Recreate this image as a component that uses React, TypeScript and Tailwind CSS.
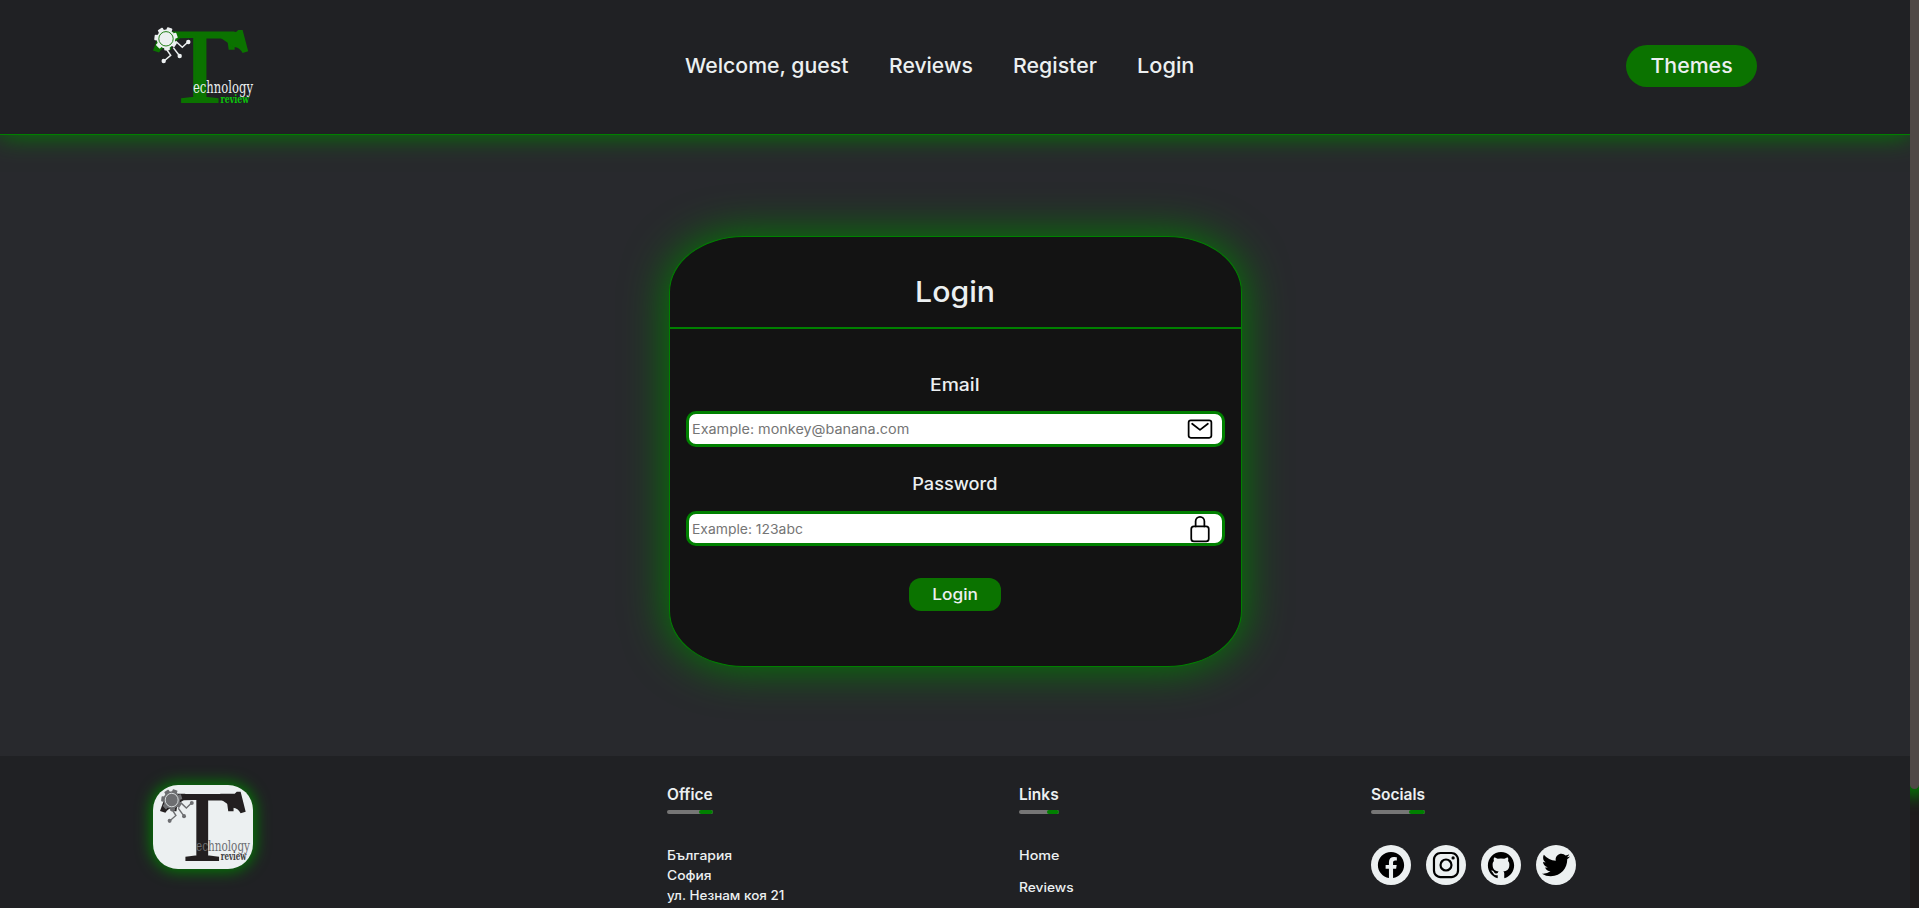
import type { ReactNode } from "react";
import {
  IoLockClosedOutline,
  IoLogoFacebook,
  IoLogoGithub,
  IoLogoInstagram,
  IoLogoTwitter,
  IoMailOutline,
} from "react-icons/io5";

type LogoProps = {
  className: string;
  letter: string;
  accent: string;
  ring: string;
  word: string;
  review: string;
};

const TEETH = [0, 1, 2, 3, 4, 5, 6];

function Logo({ className, letter, accent, ring, word, review }: LogoProps) {
  return (
    <svg className={className} viewBox="153 28 100 78" preserveAspectRatio="none" overflow="visible">
      <text
        transform="translate(164.3 103.4) scale(1.1 1)"
        fontFamily="'Liberation Serif', serif"
        fontSize="106"
        stroke={letter}
        strokeWidth="2"
        fill={letter}
      >
        T
      </text>
      <g fill={letter}>
        <path d="M220 33H236L238.3 31H242.6L248.2 52.2 242.6 54C240.5 50 238 48.5 234 48L220 38.6Z" />
        <path d="M181 33H160L153 51.5 159 53.4C161 50 164 48.5 167 48L181 38.6Z" />
      </g>
      <g fill={accent}>
        {TEETH.map((i) => (
          <rect
            key={i}
            x="163.2"
            y="28.2"
            width="5.6"
            height="6"
            rx="0.8"
            transform={`rotate(${20 + (i * 360) / 7} 166 39.8)`}
          />
        ))}
        <circle cx="166" cy="39.8" r="9.4" />
        <circle cx="188.3" cy="43" r="2.2" />
        <circle cx="179.7" cy="57" r="2.2" />
        <circle cx="163.7" cy="62" r="2.2" />
      </g>
      <circle cx="166" cy="39.8" r="7.2" fill="none" stroke={ring} strokeWidth="0.9" />
      <g fill="none" stroke={accent} strokeWidth="1.5">
        <path d="M175.7 42.3 182.3 48.3 188 43" />
        <path d="M173.3 48.6 179.7 57" />
        <path d="M165.3 48.5 170.7 56.3 164 62" />
      </g>
      <text
        x="193"
        y="94"
        textLength="60"
        lengthAdjust="spacingAndGlyphs"
        fontFamily="'DejaVu Serif', serif"
        fontSize="16"
        fill={word}
      >
        echnology
      </text>
      <text
        x="220.5"
        y="104"
        textLength="28.5"
        lengthAdjust="spacingAndGlyphs"
        fontFamily="'DejaVu Serif', serif"
        fontWeight="700"
        fontSize="11"
        fill={review}
      >
        review
      </text>
    </svg>
  );
}

function FooterHeading({ children }: { children: ReactNode }) {
  return (
    <div className="w-fit">
      <div className="h-5 text-[15.5px] font-semibold leading-5">{children}</div>
      <div className="mt-[5px] flex h-1 justify-end overflow-hidden rounded-full bg-[#767676]">
        <div className="w-[30%] rounded-full bg-[#008000]" />
      </div>
    </div>
  );
}

function SocialLink({ children }: { children: ReactNode }) {
  return (
    <a className="flex size-10 items-center justify-center rounded-full bg-[#ecf0f1] text-[30px] text-black">
      {children}
    </a>
  );
}

export default function App() {
  return (
    <div className="flex h-[908px] overflow-hidden bg-[#28292d] font-['Inter','Noto_Sans',sans-serif] text-[#ecf0f1]">
      <div className="flex min-w-0 flex-1 flex-col overflow-hidden">
        <header className="relative z-10 flex h-[135px] shrink-0 items-center border-b border-[#008000] bg-[#202124] pr-[153px] pb-0.5 pl-[153px] text-[20.5px] font-medium shadow-[0_0_25px_#008000]">
          <Logo
            className="h-[78px] w-[100px]"
            letter="#0b7300"
            accent="#ecf0f1"
            ring="#0b7300"
            word="#ecf0f1"
            review="#0bc40b"
          />
          <nav className="ml-[432px] flex whitespace-nowrap">
            <a className="w-[204px] origin-left scale-x-[1.036]">Welcome, guest</a>
            <a className="w-[124px] origin-left scale-x-[1.03]">Reviews</a>
            <a className="w-[124px] origin-left scale-x-[1.04]">Register</a>
            <a className="origin-left scale-x-[1.06]">Login</a>
          </nav>
          <button className="ml-auto flex h-[42px] w-[131px] items-center justify-center rounded-full bg-[#0b7300]">
            <span className="inline-block scale-x-[1.04]">Themes</span>
          </button>
        </header>

        <main className="flex h-[621px] shrink-0 items-start justify-center pt-[101px]">
          <form className="h-[431px] w-[573px] overflow-hidden rounded-[13%] border border-[#008000] bg-[#131313] text-center shadow-[0_0_45px_#008000]">
            <h1 className="flex h-[92px] items-center justify-center border-b-2 border-[#008000] pt-5 text-[28px] font-medium">
              <span className="inline-block scale-x-[1.08]">Login</span>
            </h1>
            <div className="flex flex-col items-center px-4 pt-11 text-[17px] font-medium leading-6">
              <label className="inline-block scale-x-[1.14]">Email</label>
              <div className="mt-3.5 flex h-9 w-[539px] items-center justify-between rounded-[10px] border-3 border-[#008000] bg-white pr-2 pl-[3px]">
                <span className="inline-block origin-left scale-x-[1.107] text-[13px] font-normal text-[#757575]">
                  Example: monkey@banana.com
                </span>
                <IoMailOutline className="size-7 text-black" />
              </div>
              <label className="mt-[25px] inline-block scale-x-[1.07]">Password</label>
              <div className="mt-[15px] flex h-[35px] w-[539px] items-center justify-between rounded-[10px] border-3 border-[#008000] bg-white pr-2 pl-[3px]">
                <span className="inline-block origin-left scale-x-[1.07] text-[13px] font-normal text-[#757575]">
                  Example: 123abc
                </span>
                <IoLockClosedOutline className="size-7 text-black" />
              </div>
              <button className="mt-8 flex h-[33px] w-[92px] items-center justify-center rounded-xl bg-[#0b7300] pb-px text-[16px]">
                <span className="inline-block scale-x-[1.08]">Login</span>
              </button>
            </div>
          </form>
        </main>

        <footer className="flex h-[152px] shrink-0 overflow-hidden bg-[#202124] pt-[29px] pl-[153px]">
          <div className="w-[514px]">
            <div className="h-[84px] w-[100px] rounded-[25px] bg-[#ecf0f1] pt-1 pl-[7px] shadow-[0_0_15px_2px_#008000]">
              <Logo
                className="h-[73px] w-[90px]"
                letter="#231f20"
                accent="#6d6e71"
                ring="#ecf0f1"
                word="#6d6e71"
                review="#414042"
              />
            </div>
          </div>
          <section className="w-[352px]">
            <FooterHeading>Office</FooterHeading>
            <address className="mt-8 text-[12.8px] font-medium not-italic leading-5">
              <p className="origin-left scale-x-[1.09]">България</p>
              <p className="origin-left scale-x-[1.08]">София</p>
              <p className="origin-left scale-x-[1.05]">ул. Незнам коя 21</p>
            </address>
          </section>
          <section className="w-[352px]">
            <FooterHeading>Links</FooterHeading>
            <ul className="mt-8 flex flex-col gap-3 text-[12.8px] font-medium leading-5">
              <li className="origin-left scale-x-[1.12]">Home</li>
              <li className="origin-left scale-x-[1.075]">Reviews</li>
            </ul>
          </section>
          <section>
            <FooterHeading>Socials</FooterHeading>
            <div className="mt-[31px] flex gap-[15px]">
              <SocialLink>
                <IoLogoFacebook />
              </SocialLink>
              <SocialLink>
                <IoLogoInstagram />
              </SocialLink>
              <SocialLink>
                <IoLogoGithub />
              </SocialLink>
              <SocialLink>
                <IoLogoTwitter />
              </SocialLink>
            </div>
          </section>
        </footer>
      </div>

      <div className="w-[9px] shrink-0 overflow-hidden bg-[#1f1b1b]">
        <div className="h-[789px] rounded-b-full bg-[#504846] shadow-[0_0_16px_8px_#008000]" />
      </div>
    </div>
  );
}
